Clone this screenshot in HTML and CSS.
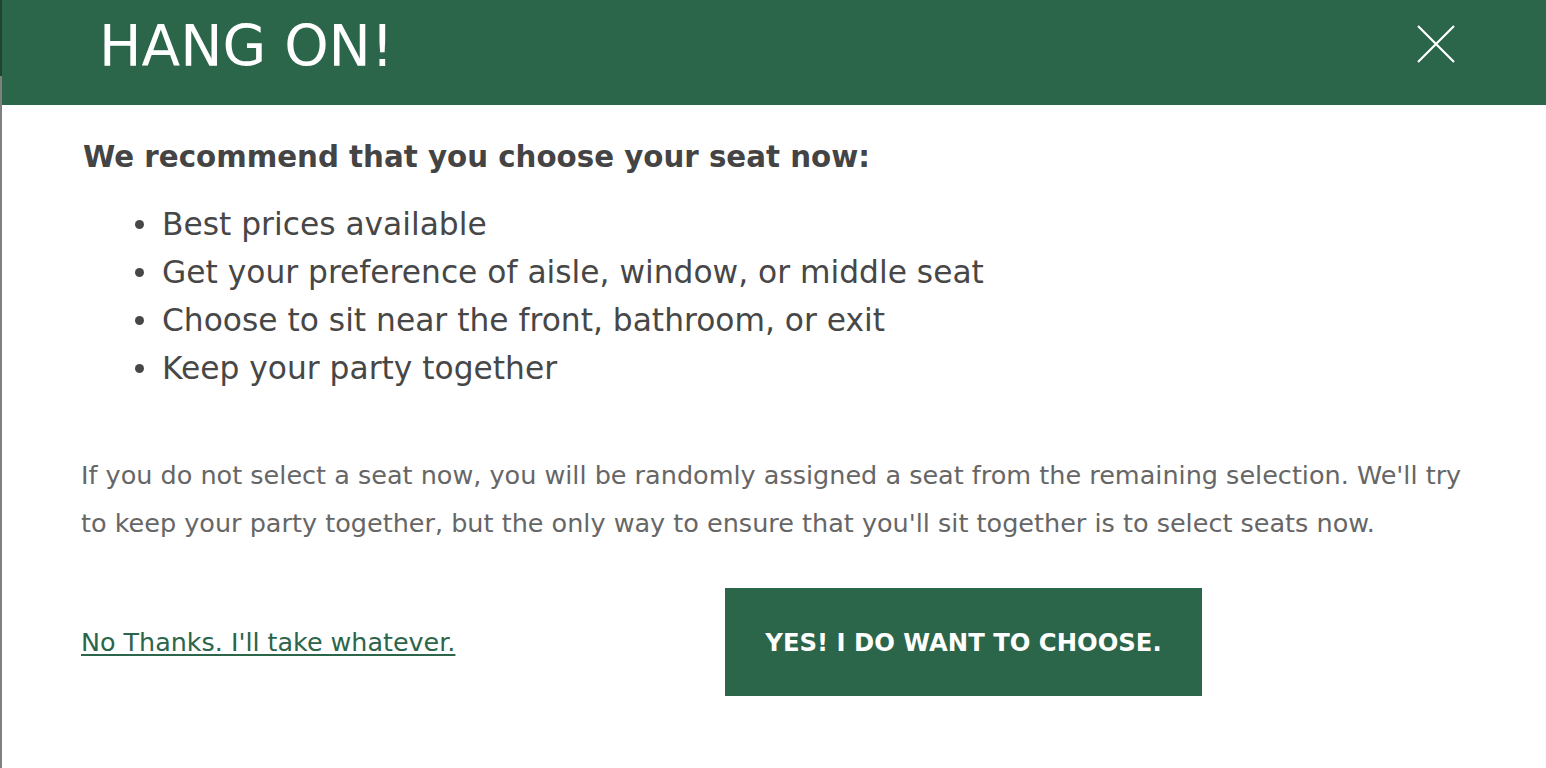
FILE: index.html
```html
<!DOCTYPE html>
<html lang="en">
<head>
<meta charset="utf-8">
<title>Hang on!</title>
<link rel="stylesheet" href="styles.css">
</head>
<body>
<div class="modal">
  <header class="modal-header">
    <h1 class="modal-title">HANG ON!</h1>
    <button class="close-btn" aria-label="Close">
      <svg width="40" height="40" viewBox="0 0 40 40" aria-hidden="true">
        <path d="M2 2 L38 38 M38 2 L2 38" stroke="#ffffff" stroke-width="2.2" fill="none"/>
      </svg>
    </button>
  </header>
  <main class="modal-body">
    <h2 class="lead">We recommend that you choose your seat now:</h2>
    <ul class="benefits">
      <li>Best prices available</li>
      <li>Get your preference of aisle, window, or middle seat</li>
      <li>Choose to sit near the front, bathroom, or exit</li>
      <li>Keep your party together</li>
    </ul>
    <p class="note">If you do not select a seat now, you will be randomly assigned a seat from the remaining selection. We'll try to keep your party together, but the only way to ensure that you'll sit together is to select seats now.</p>
    <div class="actions">
      <a class="decline" href="#">No Thanks. I'll take whatever.</a>
      <button class="accept">YES! I DO WANT TO CHOOSE.</button>
    </div>
  </main>
</div>
</body>
</html>
```
FILE: styles.css
```css
html, body {
  margin: 0;
  padding: 0;
  height: 100%;
  overflow: hidden;
}
body {
  background: linear-gradient(to bottom, #1f4231 0, #1f4231 76px, #808080 76px, #808080 100%);
  font-family: "DejaVu Sans", sans-serif;
}
.modal {
  margin-left: 2px;
  min-height: 100vh;
  background: #ffffff;
}
.modal-header {
  height: 105px;
  box-sizing: border-box;
  background: #2b654a;
  display: flex;
  justify-content: space-between;
  align-items: flex-start;
  padding: 15px 90px 0 97px;
}
.modal-title {
  margin: 0;
  font-family: "DejaVu Sans", sans-serif;
  font-weight: 400;
  font-size: 56.5px;
  line-height: 64px;
  color: #ffffff;
}
.close-btn {
  margin-top: 9px;
  padding: 0;
  border: 0;
  background: none;
  width: 40px;
  height: 40px;
  cursor: pointer;
}
.close-btn svg { display: block; }
.modal-body {
  padding: 34px 0 0 79px;
}
.lead {
  margin: 0 0 0 2px;
  font-size: 29.3px;
  line-height: 36px;
  font-weight: 700;
  color: #444444;
}
.benefits {
  list-style: none;
  margin: 25px 0 0 0;
  padding: 0;
}
.benefits li {
  position: relative;
  padding-left: 81px;
  font-size: 31.3px;
  line-height: 48px;
  color: #474747;
}
.benefits li::before {
  content: "";
  position: absolute;
  left: 54px;
  top: 20px;
  width: 9px;
  height: 9px;
  border-radius: 50%;
  background: #474747;
}
.note {
  margin: 59px 0 0 0;
  width: 1400px;
  font-size: 25.5px;
  line-height: 48px;
  color: #666666;
}
.actions {
  margin-top: 41px;
  display: grid;
  grid-template-columns: 644px 477px;
  align-items: center;
}
.decline {
  justify-self: start;
  font-size: 25.4px;
  color: #2b654a;
  text-decoration: underline;
  text-decoration-thickness: 1.5px;
  text-underline-offset: 3px;
}
.accept {
  height: 108px;
  border: 0;
  margin: 0;
  padding: 0;
  background: #2b654a;
  color: #ffffff;
  font-family: "DejaVu Sans", sans-serif;
  font-weight: 700;
  font-size: 24.3px;
  cursor: pointer;
}
```
